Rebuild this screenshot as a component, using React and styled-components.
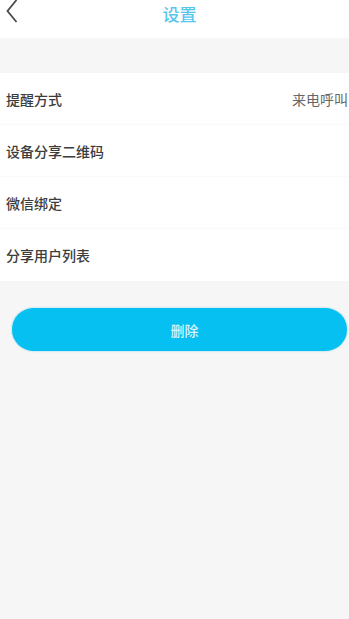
import React from "react"
import styled, { createGlobalStyle } from "styled-components"

const GlobalStyle = createGlobalStyle`
  html, body {
    margin: 0;
    padding: 0;
    background: #f6f6f6;
    font-family: "Noto Sans CJK SC", "Noto Sans", sans-serif;
  }
`

const Page = styled.div`
  width: 349px;
  min-height: 619px;
  background: #f6f6f6;
`

const Header = styled.div`
  position: relative;
  height: 38px;
  background: #fff;
  display: flex;
  align-items: flex-start;
  justify-content: center;
`

const BackButton = styled.div`
  position: absolute;
  left: 5px;
  top: -2px;
  width: 14px;
  height: 26px;
  display: flex;
  align-items: center;
`

const Title = styled.div`
  margin: 3px 0 0 10px;
  font-size: 17px;
  font-weight: 500;
  line-height: 22px;
  color: #56c6ef;
`

const Gap = styled.div`
  height: 35px;
`

const List = styled.div`
  background: #fff;
`

const Row = styled.div`
  height: 52px;
  display: flex;
  align-items: center;
  justify-content: space-between;
  padding: 0 1px 0 6px;
  border-bottom: ${props => props.last ? "none" : "1px solid #fafafa"};
  box-sizing: border-box;
`

const Label = styled.span`
  font-size: 14px;
  font-weight: 500;
  color: #3c3c3c;
`

const Value = styled.span`
  font-size: 14px;
  color: #666;
`

const ButtonWrap = styled.div`
  padding: 27px 2px 0 12px;
`

const DeleteButton = styled.div`
  height: 43px;
  border-radius: 22px;
  background: #06c0f1;
  box-shadow: 0 0 2px rgba(6, 170, 230, 0.5);
  display: flex;
  align-items: center;
  justify-content: center;
  color: #d9f3fb;
  font-size: 14px;
  font-weight: 500;
  padding-left: 10px;
`

const rows = [
  { label: "提醒方式", value: "来电呼叫" },
  { label: "设备分享二维码" },
  { label: "微信绑定" },
  { label: "分享用户列表" },
]

export default function App() {
  return <Page>
    <GlobalStyle />
    <Header>
      <BackButton>
        <svg width="14" height="26" viewBox="0 0 14 26">
          <path d="M11.5 2 L2.5 13 L11.5 24" fill="none" stroke="#4a4a4a" strokeWidth="1.8" />
        </svg>
      </BackButton>
      <Title>设置</Title>
    </Header>
    <Gap />
    <List>
      {rows.map((r, i) =>
        <Row key={r.label} last={i === rows.length - 1}>
          <Label>{r.label}</Label>
          {r.value && <Value>{r.value}</Value>}
        </Row>
      )}
    </List>
    <ButtonWrap>
      <DeleteButton>删除</DeleteButton>
    </ButtonWrap>
  </Page>
}
